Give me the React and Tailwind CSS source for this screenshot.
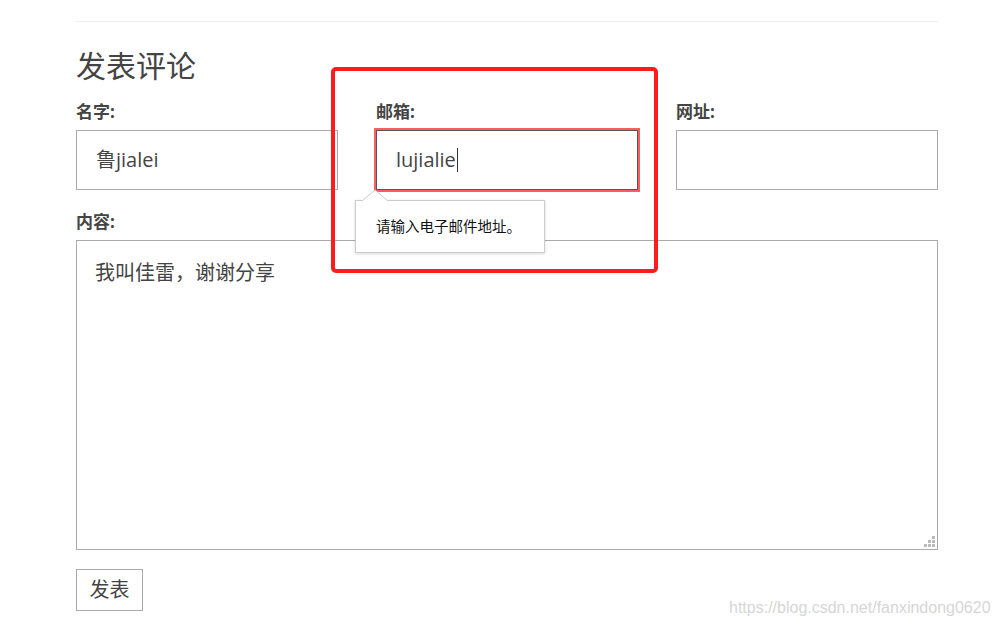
import React from "react";

export default function App() {
  const font = { fontFamily: '"Open Sans", "Noto Sans CJK SC", sans-serif' };
  return (
    <div className="relative w-[998px] h-[624px] bg-white overflow-hidden text-[#444]" style={font}>
      <div className="pl-[76px] w-[938px]">
        <div className="h-[21px]" />
        <div className="border-t border-[#eeeeee]" />
        <h2 className="mt-[24px] text-[30px] leading-[40px] font-normal text-[#444]">发表评论</h2>
        <div className="mt-[14px] grid grid-cols-3 gap-x-[38px]">
          <div>
            <div className="text-[17px] leading-[24px] font-bold">名字:</div>
            <div className="mt-[6px] h-[60px] border border-[#aaaaaa] flex items-center pl-[19px] text-[20px]">鲁jialei</div>
          </div>
          <div>
            <div className="text-[17px] leading-[24px] font-bold">邮箱:</div>
            <div className="mt-[6px] h-[60px] border border-[#555] shadow-[0_0_0_2px_rgba(255,40,40,0.75)] flex items-center pl-[19px] text-[20px]">
              lujialie<span className="inline-block w-px h-[24px] bg-[#333] ml-[1px]" />
            </div>
          </div>
          <div>
            <div className="text-[17px] leading-[24px] font-bold">网址:</div>
            <div className="mt-[6px] h-[60px] border border-[#aaaaaa]" />
          </div>
        </div>
        <div className="mt-[20px] text-[17px] leading-[24px] font-bold">内容:</div>
        <div className="relative mt-[6px] w-[862px] h-[310px]">
          <textarea
            className="block w-full h-full resize-none border border-[#aaaaaa] px-[18px] py-[17px] text-[20px] leading-[30px] text-[#444] outline-none"
            style={font}
            defaultValue="我叫佳雷，谢谢分享"
          />
          <svg className="absolute right-[3px] bottom-[3px]" width="11" height="11" viewBox="0 0 11 11">
            <rect x="8" y="0" width="3" height="3" fill="#bbbbbb" />
            <rect x="4" y="4" width="3" height="3" fill="#bbbbbb" />
            <rect x="8" y="4" width="3" height="3" fill="#bbbbbb" />
            <rect x="0" y="8" width="3" height="3" fill="#bbbbbb" />
            <rect x="4" y="8" width="3" height="3" fill="#bbbbbb" />
            <rect x="8" y="8" width="3" height="3" fill="#bbbbbb" />
          </svg>
        </div>
        <button className="mt-[19px] w-[67px] h-[42px] border border-[#aaaaaa] bg-white text-[20px] text-[#444] flex items-center justify-center" style={font}>
          发表
        </button>
      </div>

      {/* validation tooltip */}
      <div className="absolute left-[355px] top-[200px] w-[190px] h-[53px] bg-white border border-[#cccccc] shadow-[0_1px_3px_rgba(0,0,0,0.15)] flex items-center pl-[20px] text-[14.5px] text-[#111]">
        请输入电子邮件地址。
      </div>
      <svg className="absolute left-[362px] top-[189px]" width="26" height="13" viewBox="0 0 26 13">
        <path d="M0 12 L13 1 L26 12" fill="white" stroke="#cccccc" strokeWidth="1" />
        <rect x="1" y="12" width="24" height="1" fill="white" />
      </svg>

      {/* annotation box */}
      <div className="absolute left-[331px] top-[67px] w-[327px] h-[206px] border-[4px] border-[#ff1c1c] rounded-[5px]" />

      {/* watermark */}
      <div className="absolute left-[729px] top-[596px] text-[16px] text-[#d6d6d6]" style={{ fontFamily: '"Liberation Sans", Arial, sans-serif' }}>
        https://blog.csdn.net/fanxindong0620
      </div>
    </div>
  );
}
